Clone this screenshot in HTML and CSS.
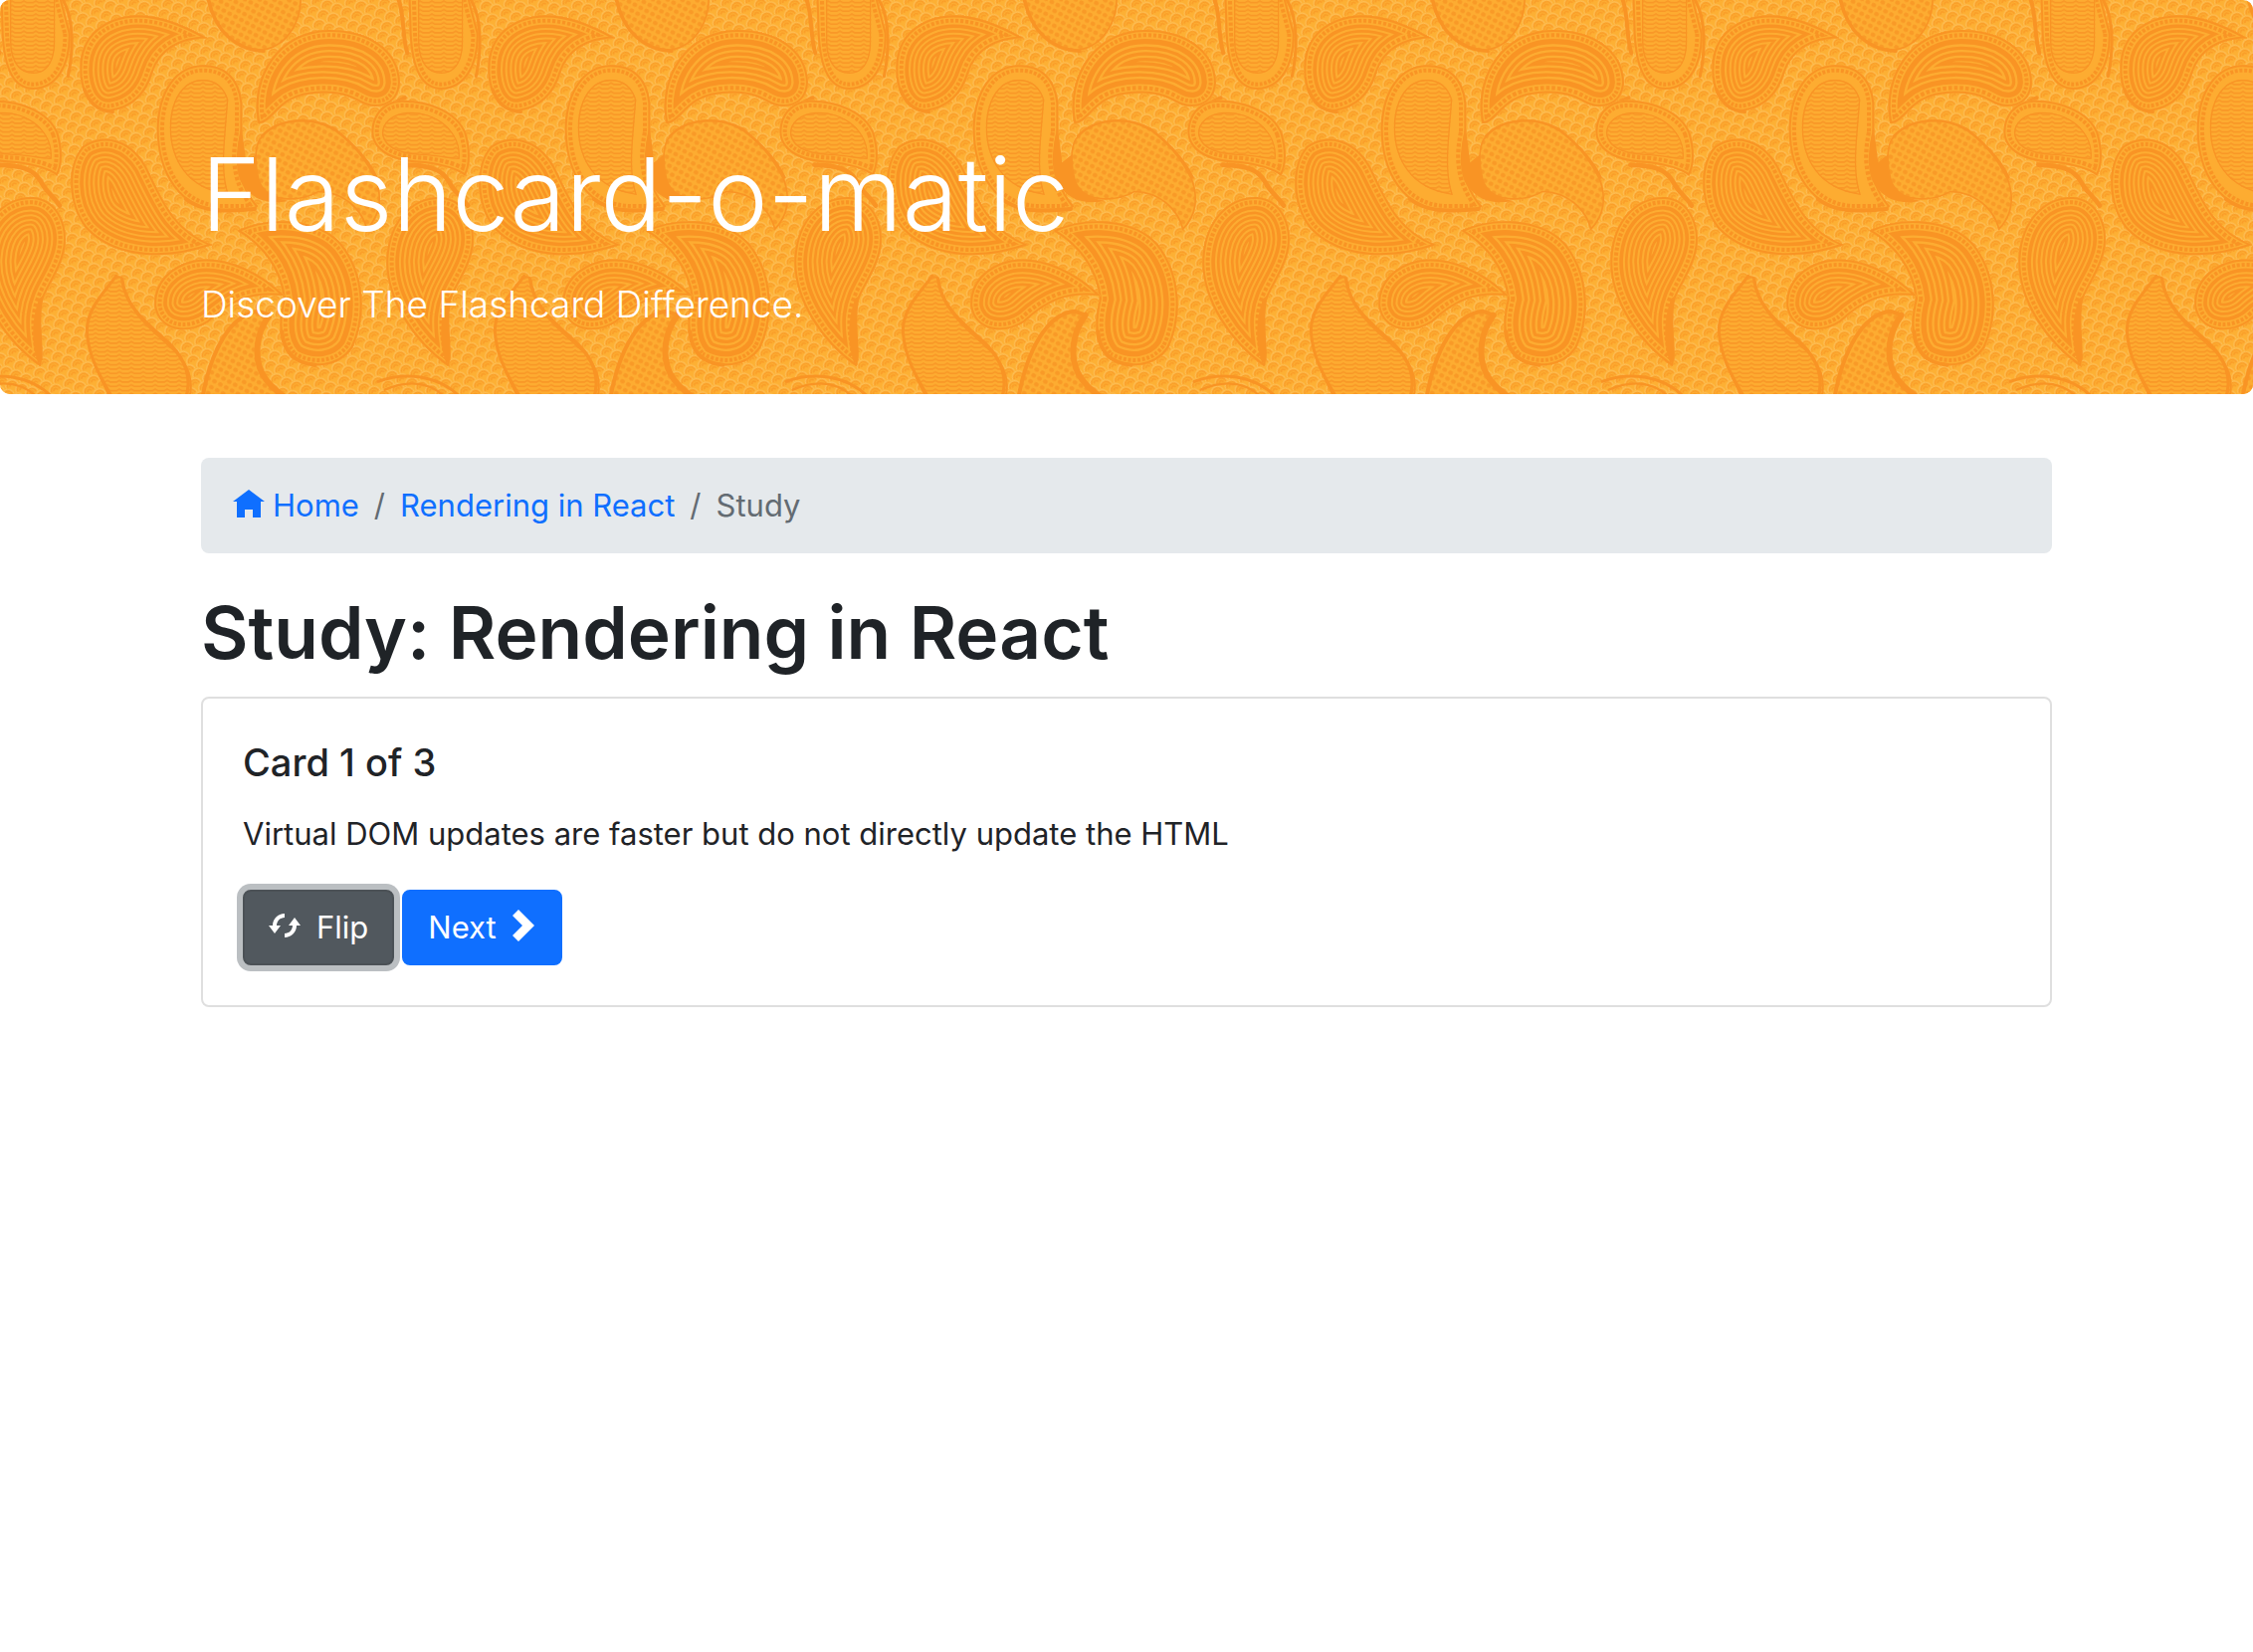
FILE: index.html
```html
<!DOCTYPE html>
<html lang="en">
<head>
<meta charset="utf-8">
<meta name="viewport" content="width=device-width, initial-scale=1">
<title>Flashcard-o-matic</title>
<link rel="stylesheet" href="styles.css">
</head>
<body>
<header class="banner">
  <svg class="paisley" aria-hidden="true">
    <defs>
      <pattern id="scallops" width="46" height="44" patternUnits="userSpaceOnUse" patternTransform="rotate(-24)">
        <path class="scallop-light" d="M1 22a19 19 0 0 1 38 0M24 44a19 19 0 0 1 38 0M-22 44a19 19 0 0 1 38 0"/>
        <path class="scallop-dark" d="M6 22a14 14 0 0 1 28 0M14 22a6 6 0 0 1 12 0M29 44a14 14 0 0 1 28 0M37 44a6 6 0 0 1 12 0M-17 44a14 14 0 0 1 28 0M-9 44a6 6 0 0 1 12 0"/>
      </pattern>
      <pattern id="waves" width="36" height="13" patternUnits="userSpaceOnUse">
        <path class="fine" d="M-2 8L9 8L18 3L27 8L38 8"/>
      </pattern>
      <pattern id="mesh" width="20" height="20" patternUnits="userSpaceOnUse" patternTransform="rotate(28)">
        <rect class="dot" x="3" y="3" width="14" height="13" rx="5"/>
      </pattern>
      <pattern id="tile" width="1230" height="1230" patternUnits="userSpaceOnUse" patternTransform="translate(-30 0) scale(.33333)">
        <use href="#motifs" x="-1230"/>
        <use href="#motifs"/>
        <use href="#motifs" x="1230"/>
      </pattern>
      <g id="motifs"></g>
    </defs>
    <g transform="scale(.33333)"><rect width="9000" height="1300" fill="url(#scallops)"/></g>
    <rect width="100%" height="100%" fill="url(#tile)"/>
  </svg>
  <div class="container">
    <h1 class="banner-title">Flashcard-o-matic</h1>
    <p class="lead">Discover The Flashcard Difference.</p>
  </div>
</header>
<main class="container">
  <nav aria-label="Breadcrumb">
    <ol class="breadcrumb">
      <li><a href="#home"><svg class="icon" viewBox="0 0 8 8" aria-hidden="true"><path d="M4 0l-4 3h1v4h2v-2h2v2h2v-4.030l1 .03-4-3z"/></svg>Home</a></li>
      <li><a href="#deck">Rendering in React</a></li>
      <li aria-current="page">Study</li>
    </ol>
  </nav>
  <h2 class="page-title">Study: Rendering in React</h2>
  <section class="card">
    <h3 class="card-title">Card 1 of 3</h3>
    <p class="card-text">Virtual DOM updates are faster but do not directly update the HTML</p>
    <div class="actions">
      <button type="button" class="btn btn-secondary is-focused"><svg class="icon" viewBox="0 0 8 8" aria-hidden="true"><path transform="translate(0 1)" d="M4 0c-1.650 0-3 1.350-3 3h-1l1.500 2 1.500-2h-1c0-1.110.890-2 2-2v-1zm2.500 1l-1.500 2h1c0 1.110-.890 2-2 2v1c1.650 0 3-1.350 3-3h1l-1.500-2z"/></svg>Flip</button>
      <button type="button" class="btn btn-primary">Next<svg class="icon icon-narrow" viewBox="0 0 6 8" aria-hidden="true"><path d="M1.500 0l-1.500 1.500 2.500 2.500-2.500 2.500 1.500 1.500 4-4-4-4z"/></svg></button>
    </div>
  </section>
</main>
<script src="paisley.js"></script>
</body>
</html>
```

FILE: styles.css
```css
* { box-sizing: border-box; }

body {
  margin: 0;
  background: #fff;
  color: #1f2327;
  font-family: Inter, "Liberation Sans", sans-serif;
  font-size: 31px;
  line-height: 48px;
}

h1, h2, h3, p, ol { margin: 0; }

.container {
  width: 100%;
  max-width: 1920px;
  margin: 0 auto;
  padding: 0 30px;
}

.banner {
  position: relative;
  overflow: hidden;
  margin-bottom: 64px;
  padding: 128px 0 60px;
  border-radius: 10px;
  background: #fdb034;
  color: #fff;
}
.banner .container { position: relative; }
.banner-title {
  margin-bottom: 14px;
  font-size: 102px;
  font-weight: 350;
  line-height: 134px;
}
.lead {
  font-size: 37px;
  font-weight: 350;
  line-height: 60px;
}

.paisley {
  position: absolute;
  inset: 0;
  width: 100%;
  height: 100%;
}
.scallop-light { fill: none; stroke: #fdbe55; stroke-width: 4; }
.scallop-dark { fill: none; stroke: #fa9d28; stroke-width: 5; }
.fine { fill: none; stroke: #f99827; stroke-width: 5; }
.dot { fill: #f99a27; }
.base { fill: #fdac31; }
.band { fill: none; stroke: #f99424; }
.band-base { fill: none; stroke: #fdac31; }
.solid { fill: #f99424; }
.line { fill: none; stroke: #f99424; stroke-linecap: round; }

.breadcrumb {
  display: flex;
  margin-bottom: 32px;
  padding: 24px 32px;
  border-radius: 8px;
  background: #e5e9ec;
  list-style: none;
  color: #636b72;
}
.breadcrumb li { display: flex; }
.breadcrumb li + li::before {
  content: "/";
  padding: 0 15px;
}
.breadcrumb a {
  display: flex;
  align-items: center;
  gap: 8px;
  color: #0f6fff;
  text-decoration: none;
}

.icon {
  flex: none;
  width: 32px;
  height: 32px;
  fill: currentColor;
}
.icon-narrow { width: 24px; }

.page-title {
  margin-bottom: 16px;
  font-size: 73px;
  font-weight: 600;
  line-height: 96px;
}

.card {
  padding: 40px;
  border: 2px solid #dfdfdf;
  border-radius: 8px;
}
.card-title {
  margin-bottom: 24px;
  font-size: 38px;
  font-weight: 500;
}
.card-text { margin-bottom: 32px; }

.actions { display: flex; gap: 8px; }
.btn {
  display: flex;
  align-items: center;
  gap: 16px;
  padding: 12px 24px;
  border: 2px solid transparent;
  border-radius: 8px;
  color: #fff;
  font: inherit;
}
.btn .icon { margin-bottom: 4px; }
.btn-secondary { background: #51585e; border-color: #4b5156; }
.btn-primary { background: #0f6fff; border-color: #0f6fff; }
.is-focused { box-shadow: 0 0 0 6px #bbbfc2; }
```

FILE: paisley.js
```js
// Builds the banner's paisley motifs. A drop's contour bands are strokes of
// falling width, painted deepest first and clipped to the drop's own outline.
const NS = "http://www.w3.org/2000/svg";
const motifs = document.getElementById("motifs");
let clips = 0;

function add(d, attrs, parent = motifs) {
  const p = document.createElementNS(NS, "path");
  p.setAttribute("d", d);
  for (const k in attrs) p.setAttribute(k, attrs[k]);
  parent.appendChild(p);
}
function clipped(d) {
  const id = `clip-${++clips}`;
  const clip = document.createElementNS(NS, "clipPath");
  clip.setAttribute("id", id);
  add(d, {}, clip);
  motifs.appendChild(clip);
  const g = document.createElementNS(NS, "g");
  g.setAttribute("clip-path", `url(#${id})`);
  motifs.appendChild(g);
  return g;
}
function band(d, g, depth, dark, dash) {
  const a = { class: dark ? "band" : "band-base", "stroke-width": depth * 2 };
  if (dash) a["stroke-dasharray"] = dash;
  add(d, a, g);
}
function border(d, g) {
  band(d, g, 27, false);
  band(d, g, 22, true, "10 6");
  band(d, g, 10, false);
  band(d, g, 6, true);
}
function drop(d, bold) {
  add(d, { class: "base" });
  const g = clipped(d);
  const pitch = bold ? 17 : 14;
  const first = bold ? 43 : 38;
  for (let depth = first + pitch * 6; depth > first; depth -= pitch) {
    band(d, g, depth, true);
    band(d, g, depth - (bold ? 10 : 8), false);
  }
  band(d, g, first, true);
  border(d, g);
}
function filled(d, fill) {
  add(d, { class: "base" });
  add(d, { fill: `url(#${fill})` });
  band(d, clipped(d), 5, true);
}
function banded(outer, inner) {
  add(outer, { class: "base" });
  border(outer, clipped(outer));
  add(inner, { class: "base" });
  add(inner, { fill: "url(#waves)" });
  band(inner, clipped(inner), 4, true);
}
function line(d, width) { add(d, { class: "line", "stroke-width": width }); }

banded("M90 -60L95 100C100 210 130 270 190 270C260 270 305 200 302 100L260 -60Z",
       "M120 -60V120C120 190 150 222 190 222C230 222 256 190 256 120V-60Z");
line("M62 0C80 50 72 110 88 160", 12);
line("M280 0C315 60 310 160 295 230", 9);

banded("M265 400C240 335 150 300 70 302C10 305 -20 350 -20 400C-15 470 70 490 140 492C200 500 235 510 262 530C280 500 280 450 265 400Z",
       "M245 480C255 400 180 335 90 338C40 342 10 370 12 405C20 450 70 465 130 468C180 470 220 480 245 480Z");
line("M85 497C150 500 190 505 215 550C230 580 250 590 270 620", 14);

drop("M715 115C620 60 520 25 430 60C355 90 325 150 332 230C340 300 375 340 425 335C490 325 530 285 550 220C570 160 620 118 715 115Z");
line("M345 270C360 310 390 335 430 337", 10);

filled("M715 -20C735 105 810 160 885 152C960 140 1005 60 998 -20Z", "mesh");
line("M718 0C740 95 800 150 885 154", 10);

drop("M868 372C840 230 930 92 1080 90C1200 88 1295 150 1296 250C1290 325 1220 335 1170 305C1110 270 1010 275 960 305C915 335 900 372 868 372Z", true);
line("M1258 320L1310 295", 12);

filled("M870 420C920 350 1030 345 1100 390C1165 435 1200 490 1225 540C1250 610 1230 660 1195 695C1180 630 1120 580 1050 580C1000 610 905 615 872 560C855 500 855 450 870 420Z", "mesh");
line("M880 410C930 355 1030 350 1100 390C1150 430 1200 480 1225 535", 8);

banded("M868 622C815 560 800 490 820 400V310C812 230 765 195 700 196C620 198 568 270 563 380C560 520 630 640 770 637C820 637 850 640 868 622Z",
       "M770 400L778 300C765 260 740 240 700 240C640 242 602 300 602 390C605 480 650 570 780 588C760 530 765 460 770 400Z");
line("M650 600C710 645 780 635 858 630", 12);
add("M818 380L832 490L862 465C858 540 880 590 960 606C900 616 862 605 832 570C797 535 797 465 818 380Z", { class: "solid" });

drop("M730 738C610 690 580 600 530 500C480 415 400 400 340 440C290 495 290 615 350 690C440 785 600 785 730 738Z");
drop("M212 1105C105 1030 20 900 25 780C32 655 110 590 190 594C270 600 302 690 282 765C262 840 215 880 208 950C200 1010 225 1060 212 1105Z");
add("M208 900C190 950 180 1020 205 1095L218 1085C222 1040 205 960 222 890Z", { class: "solid" });

drop("M805 695C900 650 1050 655 1120 735C1195 830 1195 960 1152 1050C1110 1110 1030 1115 970 1080C932 1040 925 980 945 900C935 810 880 740 805 695Z", true);
line("M940 1000C945 1060 980 1095 1040 1100", 12);

drop("M948 892C880 825 780 770 680 784C600 800 550 855 556 925C570 1000 655 1012 720 970C790 905 850 880 948 892Z");

filled("M440 830C405 880 350 930 350 1000C355 1080 395 1150 440 1240H650C690 1150 660 1090 600 1040C540 985 475 940 460 835Z", "waves");
line("M458 842C470 930 535 975 600 1035C650 1085 670 1140 650 1200", 10);
line("M440 832C405 880 350 930 352 1000C357 1080 395 1140 430 1200", 9);

filled("M695 1240C715 1060 780 945 870 937L905 950C860 1010 865 1080 885 1130C910 1170 950 1200 960 1240Z", "mesh");
line("M700 1200C725 1060 785 945 870 938L902 950", 12);
line("M902 950C858 1010 858 1080 880 1125C900 1165 935 1185 965 1210", 18);

line("M0 1150C80 1120 180 1130 245 1195", 9);
line("M20 1175C90 1145 150 1150 200 1195", 7);
```
